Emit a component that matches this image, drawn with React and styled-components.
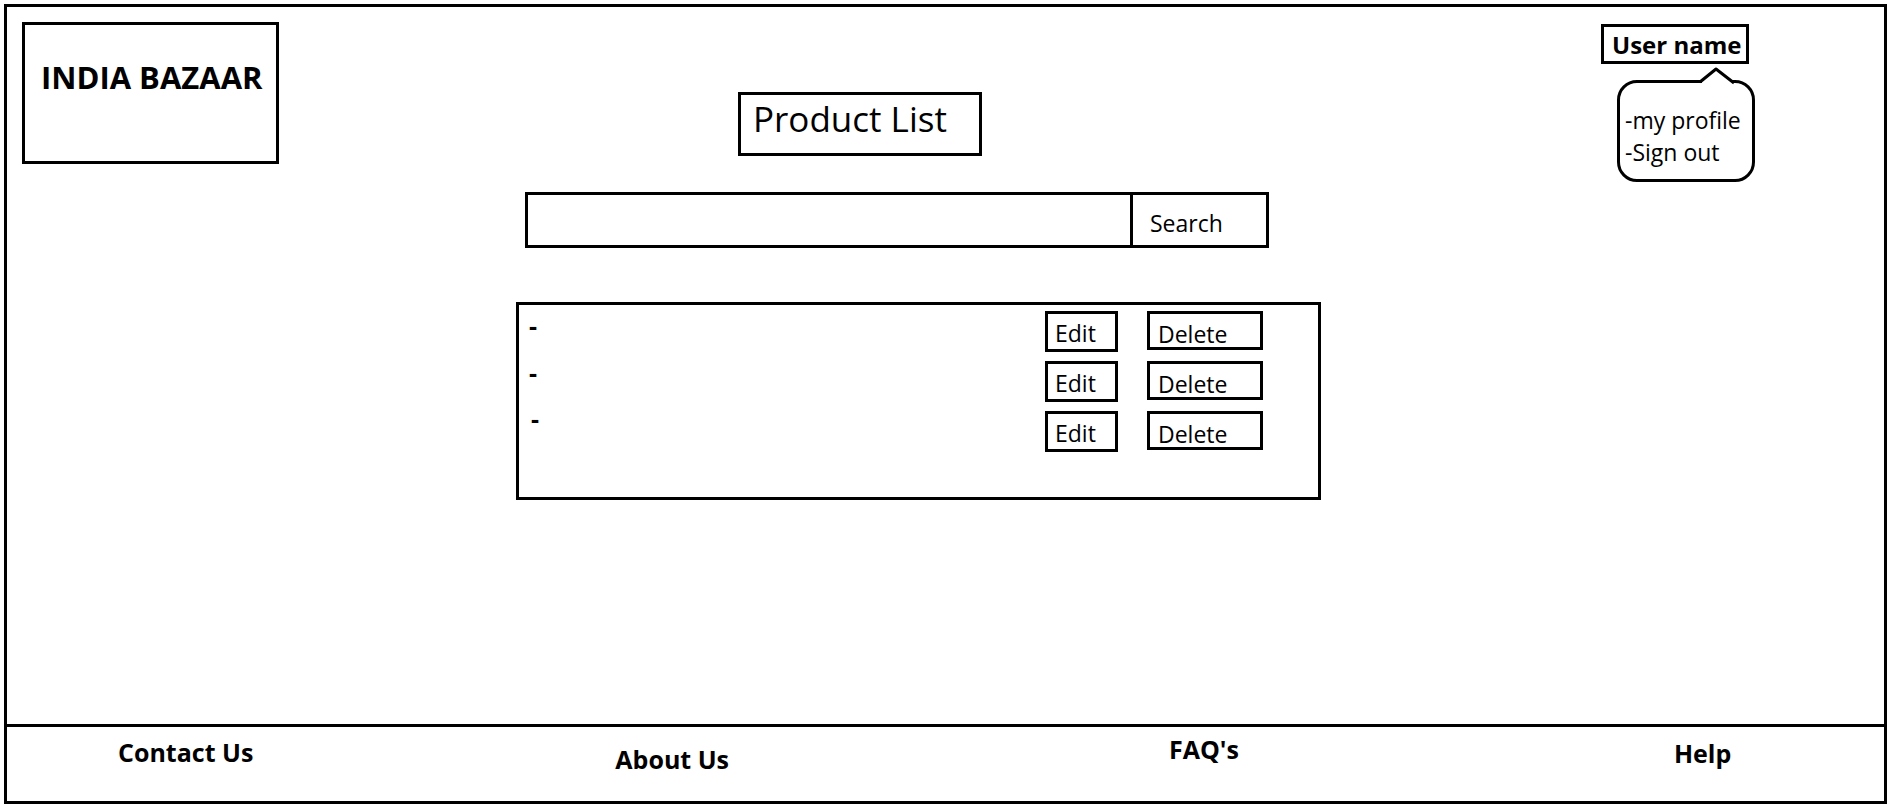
import React from "react";
import styled, { createGlobalStyle } from "styled-components";

const GlobalStyles = createGlobalStyle`
  body {
    margin: 0;
    background: #fff;
    color: #000;
    font-family: "Open Sans", "Liberation Sans", sans-serif;
  }
  * { box-sizing: border-box; }
`;

const Page = styled.div`
  padding: 4px 2px 0 4px;
`;

const Main = styled.div`
  height: 723px;
  border: 3px solid #000;
  display: flex;
  align-items: flex-start;
`;

const LogoBox = styled.div`
  width: 257px;
  height: 142px;
  margin: 15px 0 0 15px;
  border: 3px solid #000;
  padding: 31px 0 0 16px;
  font-size: 31px;
  font-weight: 700;
  white-space: nowrap;
`;

const Center = styled.div`
  width: 805px;
  margin-left: 237px;
  display: flex;
  flex-direction: column;
  align-items: flex-start;
`;

const Title = styled.h1`
  margin: 85px 0 0 222px;
  width: 244px;
  height: 64px;
  border: 3px solid #000;
  padding: 4px 0 0 12px;
  font-size: 35px;
  line-height: 40px;
  font-weight: 400;
  white-space: nowrap;
`;

const SearchBar = styled.form`
  margin: 36px 0 0 9px;
  width: 744px;
  height: 56px;
  border: 3px solid #000;
  display: flex;
`;

const SearchInput = styled.input`
  flex: 1;
  border: none;
  outline: none;
  background: transparent;
  font: inherit;
`;

const SearchButton = styled.button`
  width: 136px;
  border: none;
  border-left: 3px solid #000;
  background: #fff;
  padding: 7px 0 0 17px;
  text-align: left;
  font-family: inherit;
  font-size: 23px;
  line-height: 23px;
  color: #000;
  align-self: stretch;
  display: block;
`;

const Panel = styled.div`
  margin-top: 54px;
  width: 805px;
  height: 198px;
  border: 3px solid #000;
  padding: 6px 55px 0 10px;
  display: flex;
  flex-direction: column;
  gap: 9px;
`;

const Row = styled.div`
  display: flex;
  align-items: flex-start;
  height: 41px;
  padding-left: ${(p) => p.$shift}px;
`;

const Dash = styled.span`
  flex: 1;
  font-size: 25px;
  font-weight: 700;
  line-height: 24px;
  margin-top: ${(p) => p.$dy}px;
`;

const ActionButton = styled.button`
  border: 3px solid #000;
  background: #fff;
  color: #000;
  font-family: inherit;
  font-size: 23px;
  line-height: 23px;
  text-align: left;
  display: block;
`;

const EditButton = styled(ActionButton)`
  width: 73px;
  height: 41px;
  padding: 3px 0 0 7px;
  margin-right: 29px;
`;

const DeleteButton = styled(ActionButton)`
  width: 116px;
  height: 39px;
  padding: 7px 0 0 8px;
`;

const UserArea = styled.div`
  margin: 17px 129px 0 auto;
  display: flex;
  flex-direction: column;
  align-items: flex-start;
`;

const UserName = styled.div`
  width: 148px;
  height: 40px;
  border: 3px solid #000;
  padding: 4px 0 0 8px;
  font-size: 24px;
  line-height: 28px;
  font-weight: 700;
  white-space: nowrap;
`;

const Bubble = styled.div`
  position: relative;
  margin: 16px 0 0 16px;
  width: 138px;
  height: 102px;
  border: 3px solid #000;
  border-radius: 20px;
  padding: 21px 0 0 5px;
  font-size: 23px;
  line-height: 32px;
  white-space: nowrap;
`;

const Pointer = styled.svg`
  position: absolute;
  left: 80px;
  top: -16px;
  overflow: visible;
`;

const Footer = styled.footer`
  height: 77px;
  border: 3px solid #000;
  border-top: none;
  display: flex;
  align-items: flex-start;
`;

const FooterLink = styled.a`
  margin-left: ${(p) => p.$ml}px;
  margin-top: ${(p) => p.$mt}px;
  font-size: 25px;
  line-height: 25px;
  font-weight: 700;
  color: #000;
  text-decoration: none;
  white-space: nowrap;
`;

const products = [
  { id: 1, dy: 2, shift: 0 },
  { id: 2, dy: -1, shift: 0 },
  { id: 3, dy: -5, shift: 2 },
];

const footerLinks = [
  { label: "Contact Us", ml: 111, mt: 13 },
  { label: "About Us", ml: 362, mt: 20 },
  { label: "FAQ's", ml: 440, mt: 10 },
  { label: "Help", ml: 435, mt: 14 },
];

const App = () => {
  return (
    <>
      <GlobalStyles />
      <Page>
        <Main>
          <LogoBox>INDIA BAZAAR</LogoBox>
          <Center>
            <Title>Product List</Title>
            <SearchBar onSubmit={(e) => e.preventDefault()}>
              <SearchInput type="text" />
              <SearchButton type="submit">Search</SearchButton>
            </SearchBar>
            <Panel>
              {products.map((p) => (
                <Row key={p.id} $shift={p.shift}>
                  <Dash $dy={p.dy}>-</Dash>
                  <EditButton>Edit</EditButton>
                  <DeleteButton>Delete</DeleteButton>
                </Row>
              ))}
            </Panel>
          </Center>
          <UserArea>
            <UserName>User name</UserName>
            <Bubble>
              <Pointer width="36" height="20" viewBox="0 0 36 20">
                <rect x="2" y="12" width="30" height="7" fill="#fff" />
                <path
                  d="M0 15 L16 2 L34 16"
                  fill="#fff"
                  stroke="#000"
                  strokeWidth="3"
                  strokeLinejoin="round"
                />
              </Pointer>
              <div>-my profile</div>
              <div>-Sign out</div>
            </Bubble>
          </UserArea>
        </Main>
        <Footer>
          {footerLinks.map((l) => (
            <FooterLink key={l.label} href="#" $ml={l.ml} $mt={l.mt}>
              {l.label}
            </FooterLink>
          ))}
        </Footer>
      </Page>
    </>
  );
};

export default App;
